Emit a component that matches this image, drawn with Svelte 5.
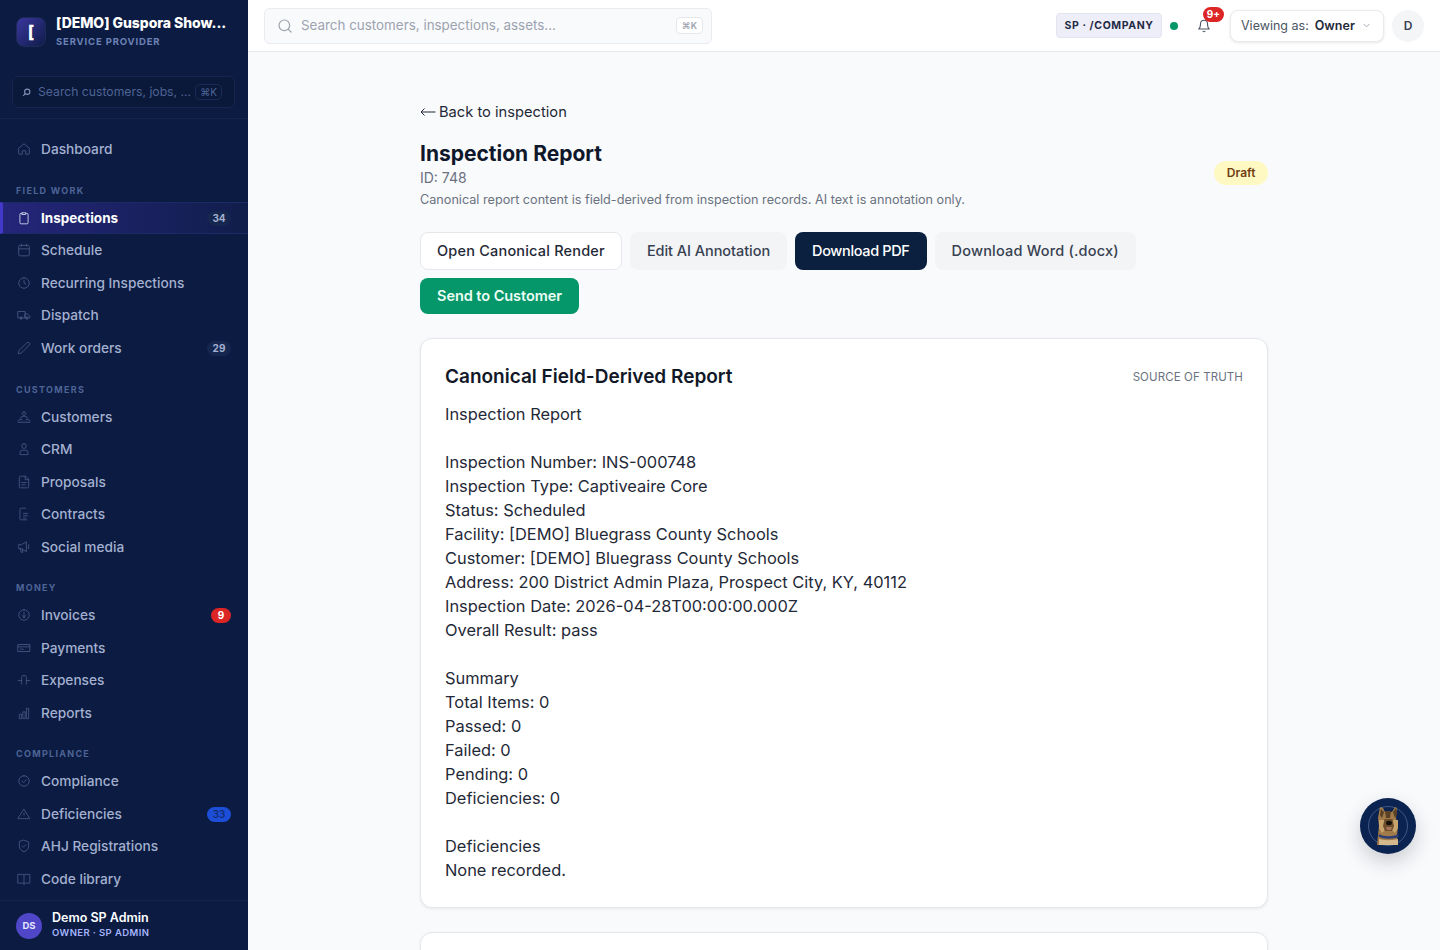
<script>
	const icons = {
		home: 'M3 10.5 12 3l9 7.5V20a1 1 0 0 1-1 1h-5v-6H9v6H4a1 1 0 0 1-1-1z',
		clipboard: 'M9 4H7a2 2 0 0 0-2 2v14a2 2 0 0 0 2 2h10a2 2 0 0 0 2-2V6a2 2 0 0 0-2-2h-2M9 3h6v3H9z',
		calendar: 'M5 4h14a2 2 0 0 1 2 2v14a2 2 0 0 1-2 2H5a2 2 0 0 1-2-2V6a2 2 0 0 1 2-2zM3 10h18M8 2v4M16 2v4',
		clock: 'M12 3a9 9 0 1 1 0 18 9 9 0 0 1 0-18zM12 7v5l3 2',
		truck: 'M2 6h12v11H2zM14 10h4l4 4v3h-8zM7 19a2 2 0 1 0 0-4 2 2 0 0 0 0 4zM17 19a2 2 0 1 0 0-4 2 2 0 0 0 0 4z',
		pencil: 'M17 3a2.8 2.8 0 0 1 4 4L7.5 20.5 2 22l1.500-5.500z',
		people: 'M12 3a3 3 0 1 1 0 6 3 3 0 0 1 0-6zM6 14a5 3 0 0 1 12 0M2 19a4 3 0 0 1 7-2M22 19a4 3 0 0 0-7-2M2 21h20',
		user: 'M12 3a4 4 0 1 1 0 8 4 4 0 0 1 0-8zM5 21v-2a5 5 0 0 1 5-5h4a5 5 0 0 1 5 5v2z',
		file: 'M14 2H6a2 2 0 0 0-2 2v16a2 2 0 0 0 2 2h12a2 2 0 0 0 2-2V8zM14 2v6h6M8 13h8M8 17h6',
		contract: 'M15 2H7a2 2 0 0 0-2 2v16a2 2 0 0 0 2 2h10M11 11h7M11 15h7M11 19h4',
		megaphone: 'M3 8v7h5l8 5V3L8 8zM6 15l1 6h3l-1-6M20 8v7',
		dollar: 'M12 3a9 9 0 1 1 0 18 9 9 0 0 1 0-18zM12 7v10M9 13l3 4 3-4',
		card: 'M2 6h20v12H2zM2 10h20M6 14h5',
		split: 'M2 13h5M17 13h5M8 13V8a4 4 0 0 1 8 0v5M8 13v6M16 13v6',
		bars: 'M4 21v-7h4v7zM10 21V10h4v11zM16 21V4h4v17z',
		check: 'M12 3a9 9 0 1 1 0 18 9 9 0 0 1 0-18zM8.500 12l2.500 2.500 4.500-4.500',
		triangle: 'M12 4 22 20H2zM12 10v4',
		shield: 'M12 2 20 5v7c0 5-3.500 8-8 10-4.500-2-8-5-8-10V5zM9 12l2 2 4-4',
		book: 'M2 4h8a2 2 0 0 1 2 2 2 2 0 0 1 2-2h8v15h-8a2 2 0 0 0-2 2 2 2 0 0 0-2-2H2zM12 6v15'
	};

	const nav = [
		{ items: [{ label: 'Dashboard', icon: 'home' }] },
		{
			title: 'Field work',
			items: [
				{ label: 'Inspections', icon: 'clipboard', count: 34, active: true },
				{ label: 'Schedule', icon: 'calendar' },
				{ label: 'Recurring Inspections', icon: 'clock' },
				{ label: 'Dispatch', icon: 'truck' },
				{ label: 'Work orders', icon: 'pencil', count: 29 }
			]
		},
		{
			title: 'Customers',
			items: [
				{ label: 'Customers', icon: 'people' },
				{ label: 'CRM', icon: 'user' },
				{ label: 'Proposals', icon: 'file' },
				{ label: 'Contracts', icon: 'contract' },
				{ label: 'Social media', icon: 'megaphone' }
			]
		},
		{
			title: 'Money',
			items: [
				{ label: 'Invoices', icon: 'dollar', count: 9, tone: 'red' },
				{ label: 'Payments', icon: 'card' },
				{ label: 'Expenses', icon: 'split' },
				{ label: 'Reports', icon: 'bars' }
			]
		},
		{
			title: 'Compliance',
			items: [
				{ label: 'Compliance', icon: 'check' },
				{ label: 'Deficiencies', icon: 'triangle', count: 33, tone: 'blue' },
				{ label: 'AHJ Registrations', icon: 'shield' },
				{ label: 'Code library', icon: 'book' }
			]
		}
	];

	const report = `Inspection Report

Inspection Number: INS-000748
Inspection Type: Captiveaire Core
Status: Scheduled
Facility: [DEMO] Bluegrass County Schools
Customer: [DEMO] Bluegrass County Schools
Address: 200 District Admin Plaza, Prospect City, KY, 40112
Inspection Date: 2026-04-28T00:00:00.000Z
Overall Result: pass

Summary
Total Items: 0
Passed: 0
Failed: 0
Pending: 0
Deficiencies: 0

Deficiencies
None recorded.`;
</script>

<div class="shell">
	<aside class="sidebar">
		<div class="brand">
			<div class="logo">[</div>
			<div class="brand-text">
				<div class="brand-name">[DEMO] Guspora Show...</div>
				<div class="brand-sub">SERVICE PROVIDER</div>
			</div>
		</div>

		<div class="side-search-wrap">
			<div class="side-search">
				<svg class="side-search-icon" width="9" height="9" viewBox="0 0 24 24" fill="none" stroke="#7f8fb8" stroke-width="3">
					<circle cx="14" cy="10" r="7" />
					<path d="M9 15l-6 6" />
				</svg>
				<span class="side-search-text">Search customers, jobs, ...</span>
				<span class="side-kbd">⌘K</span>
			</div>
		</div>

		<nav class="nav">
			{#each nav as group}
				{#if group.title}
					<div class="group-title">{group.title}</div>
				{/if}
				{#each group.items as item}
					<div class="item" class:active={item.active}>
						<svg class="item-icon" width="14" height="14" viewBox="0 0 24 24" fill="none" stroke="currentColor" stroke-width="1.600" stroke-linecap="round" stroke-linejoin="round">
							<path d={icons[item.icon]} />
						</svg>
						<span class="item-label">{item.label}</span>
						{#if item.count}
							<span class="count {item.tone || ''}">{item.count}</span>
						{/if}
					</div>
				{/each}
			{/each}
		</nav>

		<div class="user">
			<div class="user-avatar">DS</div>
			<div class="user-text">
				<div class="user-name">Demo SP Admin</div>
				<div class="user-role">OWNER · SP ADMIN</div>
			</div>
		</div>
	</aside>

	<div class="content">
		<header class="topbar">
			<div class="top-search">
				<svg width="16" height="16" viewBox="0 0 24 24" fill="none" stroke="#9ca3af" stroke-width="1.800" stroke-linecap="round">
					<circle cx="11" cy="11" r="8" />
					<path d="m21 21-4.300-4.300" />
				</svg>
				<span class="top-search-text">Search customers, inspections, assets...</span>
				<span class="top-kbd">⌘K</span>
			</div>
			<div class="top-right">
				<span class="chip">SP · /COMPANY</span>
				<span class="dot"></span>
				<span class="bell">
					<svg width="14" height="14" viewBox="0 0 24 24" fill="none" stroke="#4b5563" stroke-width="1.800" stroke-linecap="round" stroke-linejoin="round">
						<path d="M6 8a6 6 0 0 1 12 0c0 7 3 9 3 9H3s3-2 3-9M10.300 21a2 2 0 0 0 3.400 0" />
					</svg>
					<span class="bell-badge">9+</span>
				</span>
				<div class="viewing">
					<span class="viewing-label">Viewing as:</span>
					<strong>Owner</strong>
					<svg width="11" height="11" viewBox="0 0 24 24" fill="none" stroke="#9ca3af" stroke-width="2" stroke-linecap="round" stroke-linejoin="round">
						<path d="m6 9 6 6 6-6" />
					</svg>
				</div>
				<div class="avatar">D</div>
			</div>
		</header>

		<main class="main">
			<div class="page">
				<div class="back">
					<svg width="16" height="10" viewBox="0 0 16 10" fill="none" stroke="#1f2937" stroke-width="1">
						<path d="M15.500 5H1M4.500 1.500 1 5l3.500 3.500" />
					</svg>
					Back to inspection
				</div>
				<div class="head">
					<div>
						<h1>Inspection Report</h1>
						<div class="id">ID: 748</div>
						<div class="note">Canonical report content is field-derived from inspection records. AI text is annotation only.</div>
					</div>
					<span class="draft">Draft</span>
				</div>

				<div class="actions">
					<button class="btn outline wide">Open Canonical Render</button>
					<button class="btn soft">Edit AI Annotation</button>
					<button class="btn dark">Download PDF</button>
					<button class="btn soft wide">Download Word (.docx)</button>
					<button class="btn green">Send to Customer</button>
				</div>

				<section class="card">
					<div class="card-head">
						<h2>Canonical Field-Derived Report</h2>
						<span class="source">SOURCE OF TRUTH</span>
					</div>
					<div class="report">{report}</div>
				</section>

				<section class="card next"></section>
			</div>
		</main>
	</div>

	<button class="assistant" aria-label="Assistant">
		<svg width="56" height="56" viewBox="0 0 56 56">
			<circle cx="28" cy="28" r="19.500" fill="none" stroke="#3f5a86" stroke-width="1" />
			<path d="M20 9l3 1 2 4h7l3-5 2 1-1 10 2 8-1 10 1 9H17l1-10 1-9-1-8z" fill="#a07a48" />
			<path d="M21 11l3 3-2 6-2-3zM36 10l-3 4 2 6 2-4zM25 13h6l-1 7h-4z" fill="#5a4126" />
			<path d="M19 22l5 0 1 10-3 3-3-5zM38 22l-5 0-1 10 3 3 3-5z" fill="#c9a36c" />
			<path d="M24.500 21h8l1.500 7-2 5h-7l-2-5z" fill="#6d4f2e" />
			<ellipse cx="29" cy="25" rx="3" ry="2.200" fill="#17100a" />
			<path d="M26 29h6l-1 3h-4z" fill="#a8755a" />
			<path d="M19 36c4 3 15 3 19 0l1 2.500c-5 3-15 3-20.500 0z" fill="#2b3d75" />
			<path d="M19 41c5 1.500 14 1.500 19 0v6H19z" fill="#d4b88c" />
		</svg>
	</button>
</div>

<style>
	:global(body) {
		margin: 0;
		font-family: Inter, 'Liberation Sans', sans-serif;
		background: #f9fafc;
	}

	.shell {
		display: flex;
		height: 100vh;
		overflow: hidden;
	}

	.sidebar {
		width: 248px;
		flex-shrink: 0;
		display: flex;
		flex-direction: column;
		background: #0b1b42;
		color: #a9b5d3;
	}

	.brand {
		display: flex;
		gap: 10px;
		align-items: center;
		height: 64px;
		padding: 0 16px;
		box-sizing: border-box;
	}

	.logo {
		width: 30px;
		height: 30px;
		border-radius: 8px;
		display: flex;
		align-items: center;
		justify-content: center;
		background: linear-gradient(135deg, #3b37a0, #0f1c48);
		border: 1px solid #1c2a55;
		box-sizing: border-box;
		color: #fff;
		font-size: 17px;
		font-weight: 800;
	}

	.brand-text {
		padding-bottom: 2px;
	}

	.brand-name {
		color: #fff;
		font-size: 14px;
		line-height: 16px;
		font-weight: 800;
		letter-spacing: -0.05px;
		white-space: nowrap;
	}

	.brand-sub {
		margin-top: 5px;
		color: #6d82b5;
		font-size: 9.500px;
		line-height: 12px;
		font-weight: 700;
		letter-spacing: 0.85px;
	}

	.side-search-wrap {
		padding: 12px 13px 10px 12px;
		border-bottom: 1px solid #13234d;
	}

	.side-search {
		height: 32px;
		padding: 0 12px 0 9px;
		display: flex;
		align-items: center;
		gap: 7px;
		box-sizing: border-box;
		border: 1px solid #15264f;
		border-radius: 6px;
		background: #0a1839;
	}

	.side-search-icon {
		flex-shrink: 0;
	}

	.side-search-text {
		flex: 1;
		min-width: 0;
		color: #4e6496;
		font-size: 12.200px;
		white-space: nowrap;
		padding-bottom: 1px;
	}

	.side-kbd {
		flex-shrink: 0;
		padding: 1px 4px;
		border: 1px solid #1a2b57;
		border-radius: 5px;
		color: #4e6496;
		font-size: 10px;
	}

	.nav {
		flex: 1;
		overflow: hidden;
		padding-top: 14px;
	}

	.group-title {
		height: 36.150px;
		padding: 19.500px 0 0 16px;
		box-sizing: border-box;
		color: #4e6496;
		font-size: 9px;
		font-weight: 700;
		letter-spacing: 1.300px;
		text-transform: uppercase;
	}

	.item {
		height: 32.500px;
		box-sizing: border-box;
		padding: 0 17px;
		display: flex;
		align-items: center;
		gap: 10px;
		color: #a3b0cf;
		font-size: 13.700px;
		font-weight: 500;
	}

	.item-icon {
		color: #43537d;
		flex-shrink: 0;
	}

	.item-label {
		flex: 1;
	}

	.item.active {
		background: linear-gradient(90deg, #25257a, #101e4b);
		border-left: 3px solid #4338ca;
		border-top: 1px solid #1a2a66;
		border-bottom: 1px solid #1a2a66;
		padding-left: 14px;
		color: #fff;
		font-weight: 700;
	}

	.item.active .item-label {
		font-size: 13.500px;
	}

	.item.active .item-icon {
		color: #c8d0e6;
	}

	.count {
		margin-top: 1px;
		min-width: 24px;
		height: 15px;
		line-height: 15px;
		border-radius: 8px;
		text-align: center;
		background: #15264f;
		color: #a3b0cf;
		font-size: 10px;
		font-weight: 700;
	}

	.count.red {
		min-width: 20px;
		background: #dc2626;
		color: #fff;
	}

	.count.blue {
		background: #1d4ed8;
		color: #0f2a6a;
		font-weight: 500;
	}

	.user {
		height: 50px;
		flex-shrink: 0;
		padding: 0 16px;
		display: flex;
		align-items: center;
		gap: 10px;
		box-sizing: border-box;
		border-top: 1px solid #13234d;
	}

	.user-avatar {
		width: 26px;
		height: 26px;
		border-radius: 50%;
		display: flex;
		align-items: center;
		justify-content: center;
		background: #4f46c8;
		color: #e0e7ff;
		font-size: 9.500px;
		font-weight: 700;
	}

	.user-text {
		padding-bottom: 2px;
	}

	.user-name {
		color: #fff;
		font-size: 12.500px;
		line-height: 15px;
		font-weight: 600;
	}

	.user-role {
		color: #a5b4fc;
		font-size: 9.500px;
		line-height: 15px;
		font-weight: 600;
		letter-spacing: 0.4px;
	}

	.content {
		flex: 1;
		min-width: 0;
		display: flex;
		flex-direction: column;
	}

	.topbar {
		height: 52px;
		flex-shrink: 0;
		padding: 0 16px;
		display: flex;
		align-items: center;
		justify-content: space-between;
		box-sizing: border-box;
		background: #fff;
		border-bottom: 1px solid #e5e7eb;
	}

	.top-search {
		width: 448px;
		height: 36px;
		padding: 0 8px 0 12px;
		display: flex;
		align-items: center;
		gap: 8px;
		box-sizing: border-box;
		background: #f9fafc;
		border: 1px solid #e9ebf0;
		border-radius: 6px;
	}

	.top-search-text {
		flex: 1;
		padding-bottom: 1px;
		color: #9ca3af;
		font-size: 13.400px;
	}

	.top-kbd {
		padding: 2px 5px;
		background: #fff;
		border: 1px solid #e5e7eb;
		border-radius: 4px;
		color: #9ca3af;
		font-size: 9px;
		font-weight: 600;
	}

	.top-right {
		display: flex;
		align-items: center;
	}

	.chip {
		width: 106px;
		height: 25px;
		line-height: 24px;
		text-align: center;
		border-radius: 4px;
		background: #eeeef9;
		border: 1px solid #e3e4f2;
		box-sizing: border-box;
		color: #1f2a44;
		font-size: 10.500px;
		font-weight: 700;
		letter-spacing: 0.6px;
	}

	.dot {
		width: 8px;
		height: 8px;
		margin-left: 8px;
		border-radius: 50%;
		background: #059669;
	}

	.bell {
		position: relative;
		width: 32px;
		height: 32px;
		margin-left: 10px;
		display: flex;
		align-items: center;
		justify-content: center;
	}

	.bell-badge {
		position: absolute;
		top: -3px;
		left: 15px;
		width: 21px;
		height: 15px;
		line-height: 15px;
		text-align: center;
		border-radius: 8px;
		background: #dc2626;
		color: #fff;
		font-size: 10px;
		font-weight: 700;
	}

	.viewing {
		width: 154px;
		height: 32px;
		margin-left: 10px;
		padding: 0 11px 0 10px;
		display: flex;
		align-items: center;
		gap: 6px;
		box-sizing: border-box;
		background: #fff;
		border: 1px solid #e9ebef;
		border-radius: 8px;
		box-shadow: 0 1px 3px rgba(0, 0, 0, 0.1);
		font-size: 12.500px;
		white-space: nowrap;
	}

	.viewing-label {
		color: #4b5563;
	}

	.viewing strong {
		flex: 1;
		color: #1f2937;
		font-weight: 600;
	}

	.avatar {
		width: 32px;
		height: 32px;
		margin-left: 8px;
		border-radius: 50%;
		display: flex;
		align-items: center;
		justify-content: center;
		background: #f3f5f7;
		color: #374151;
		font-size: 12px;
		font-weight: 600;
	}

	.main {
		flex: 1;
		overflow: hidden;
	}

	.page {
		width: 848px;
		margin: 0 auto;
		padding-top: 50px;
	}

	.back {
		height: 20px;
		line-height: 20px;
		display: flex;
		align-items: center;
		gap: 3px;
		color: #1f2937;
		font-size: 14.700px;
	}

	.head {
		margin-top: 19px;
		display: flex;
		align-items: center;
		justify-content: space-between;
	}

	h1 {
		margin: 0;
		color: #0f172a;
		font-size: 21px;
		line-height: 26px;
		font-weight: 700;
	}

	.id {
		margin-top: 1px;
		color: #6b7280;
		font-size: 14px;
		line-height: 20px;
	}

	.note {
		margin-top: 2px;
		color: #6b7280;
		font-size: 12.650px;
		line-height: 20px;
	}

	.draft {
		margin-bottom: 5px;
		padding: 0 12.500px;
		height: 24px;
		line-height: 24px;
		border-radius: 12px;
		background: #fef9c3;
		color: #713f12;
		font-size: 12px;
		font-weight: 600;
	}

	.actions {
		margin-top: 22px;
		display: flex;
		flex-wrap: wrap;
		gap: 8px;
	}

	.btn {
		height: 38px;
		padding: 0 16px 2px;
		box-sizing: border-box;
		border: 1px solid transparent;
		border-radius: 8px;
		font-family: inherit;
		font-size: 14.500px;
		font-weight: 500;
		white-space: nowrap;
	}

	.btn.wide {
		letter-spacing: 0.2px;
	}

	.outline {
		background: #fff;
		border-color: #e5e7eb;
		color: #1f2937;
	}

	.soft {
		background: #f3f4f6;
		color: #374151;
		letter-spacing: -0.05px;
	}

	.dark {
		background: #0b1f3f;
		color: #fff;
		letter-spacing: -0.35px;
	}

	.green {
		height: 36px;
		background: #059669;
		color: #ecfdf5;
		font-weight: 600;
		letter-spacing: -0.05px;
	}

	.card {
		margin-top: 24px;
		padding: 24px;
		box-sizing: border-box;
		height: 570px;
		background: #fff;
		border: 1px solid #e5e7eb;
		border-radius: 12px;
		box-shadow: 0 1px 3px rgba(0, 0, 0, 0.08);
	}

	.card.next {
		height: 120px;
	}

	.card-head {
		display: flex;
		align-items: center;
		justify-content: space-between;
	}

	h2 {
		margin: 0;
		color: #111827;
		font-size: 19px;
		line-height: 28px;
		font-weight: 600;
	}

	.source {
		color: #6b7280;
		font-size: 11.500px;
		letter-spacing: 0.1px;
	}

	.report {
		margin-top: 11px;
		white-space: pre-wrap;
		color: #1f2937;
		font-size: 16.400px;
		line-height: 24px;
	}

	.assistant {
		position: fixed;
		left: 1360px;
		top: 798px;
		width: 56px;
		height: 56px;
		padding: 0;
		border: none;
		border-radius: 50%;
		overflow: hidden;
		background: #0b2350;
		box-shadow: 0 8px 20px rgba(15, 23, 42, 0.2);
	}
</style>
